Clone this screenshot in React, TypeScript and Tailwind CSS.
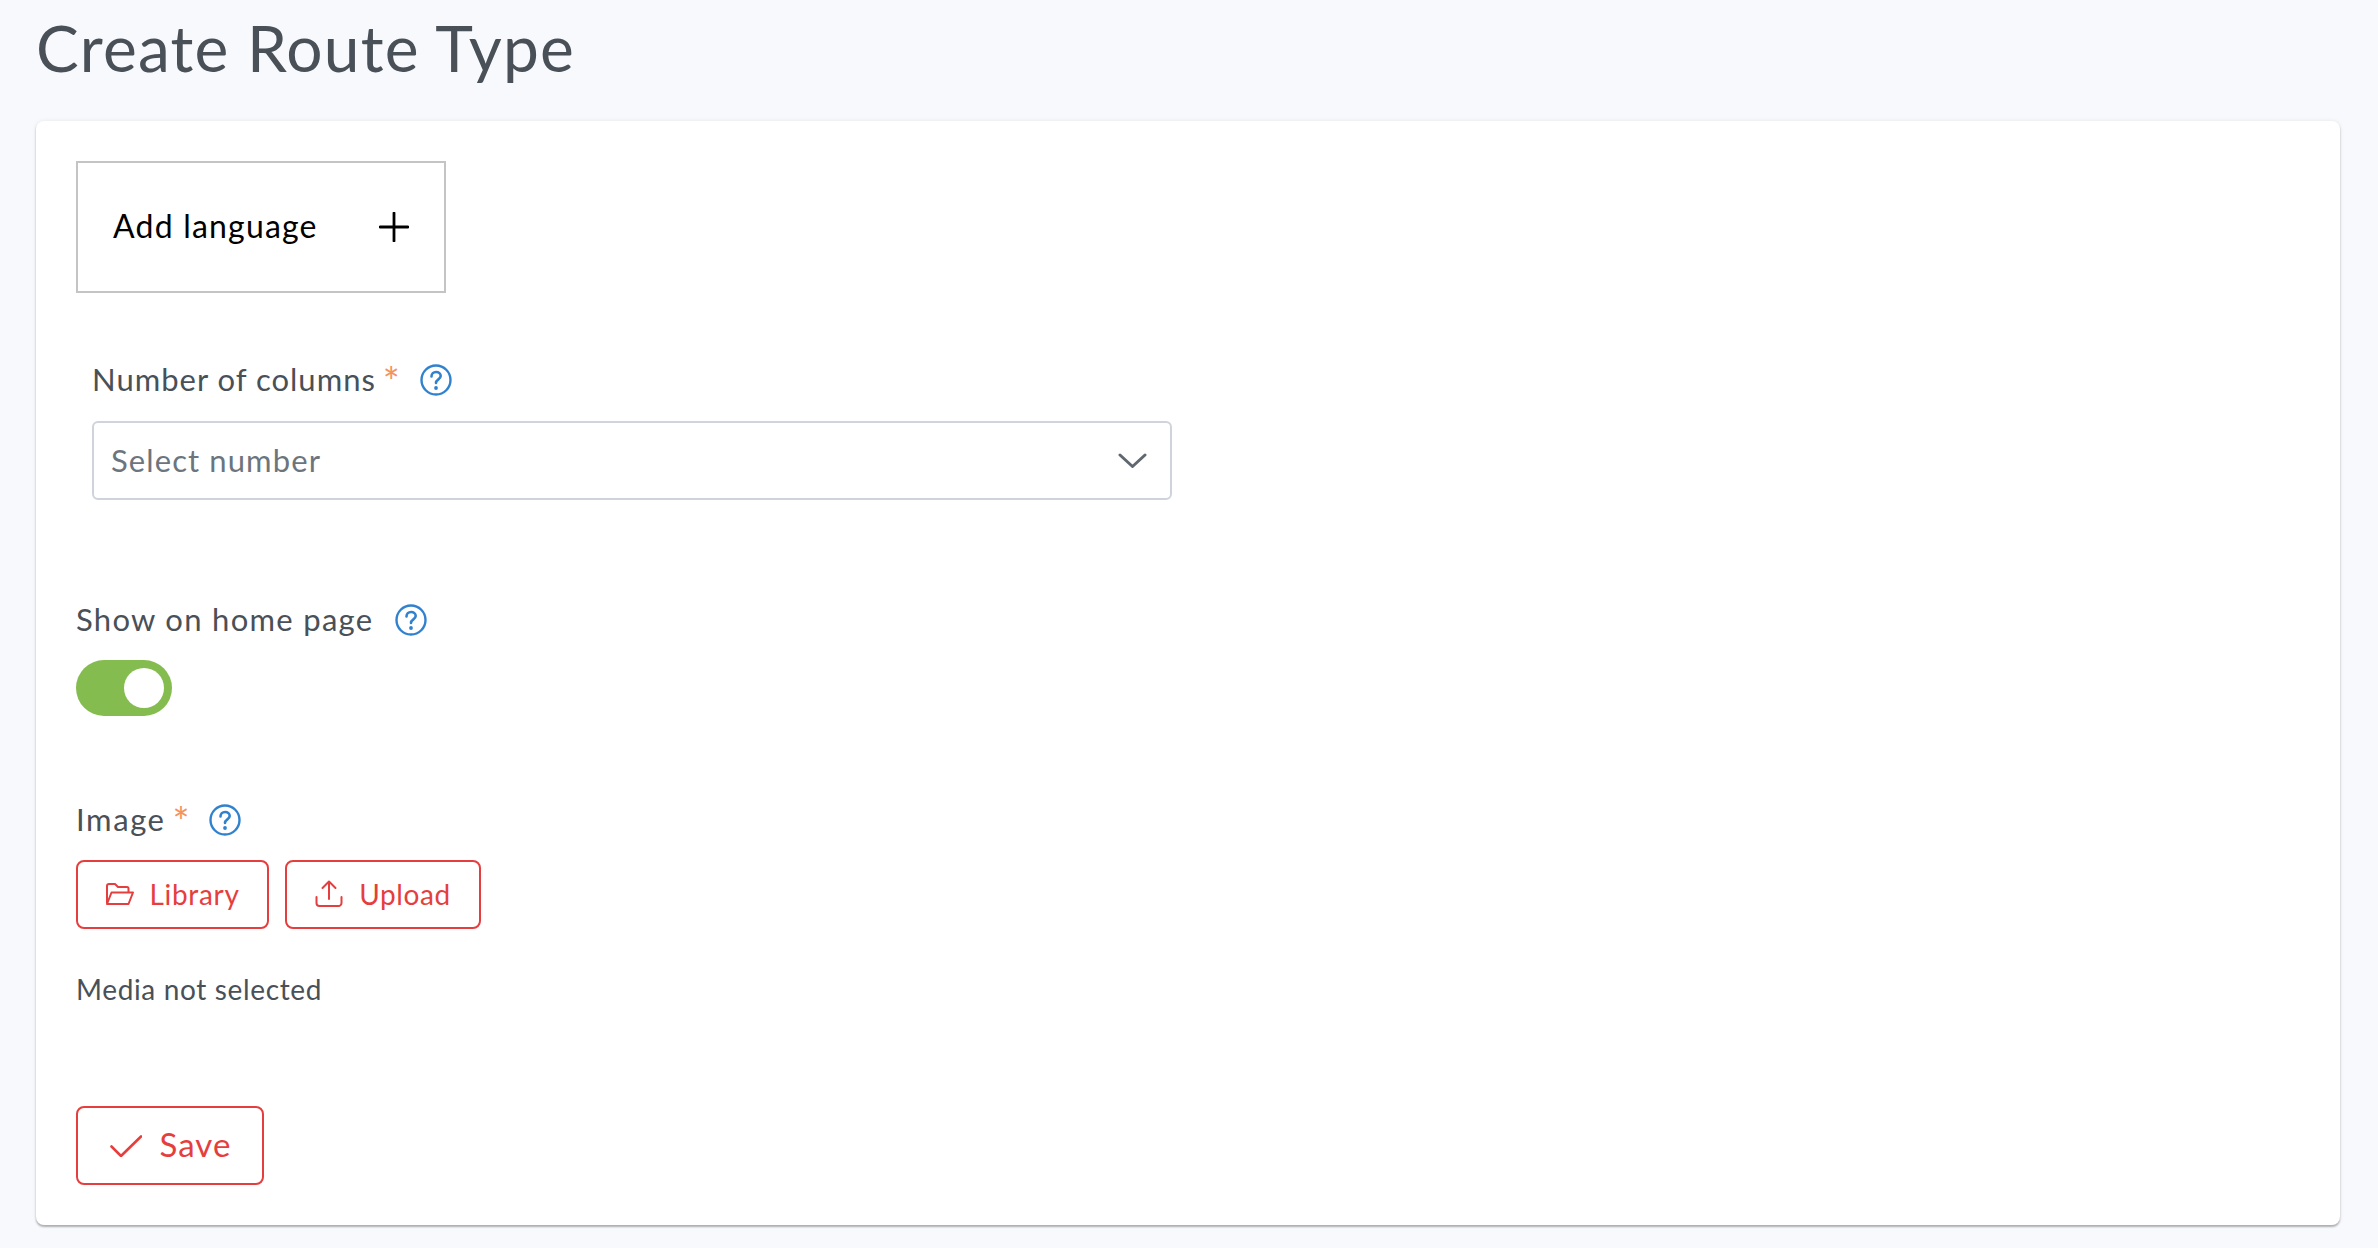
const HelpIcon = () => (
  <svg viewBox="0 0 32 32" className="h-8 w-8 shrink-0" fill="none" stroke="#3182ce">
    <circle cx="16" cy="16" r="14.5" strokeWidth="2.4" />
    <path d="M11.5 12.5c0-2.8 2-4.5 4.6-4.5 2.7 0 4.6 1.7 4.6 4 0 3.4-4.7 3.4-4.7 7" strokeWidth="2.6" strokeLinecap="round" />
    <circle cx="16" cy="24" r="1.9" fill="#3182ce" stroke="none" />
  </svg>
);

const Required = () => <span className="ml-[7px] mt-[3px] text-[40px] leading-none text-[#f6925f]">*</span>;

const FolderIcon = () => (
  <svg viewBox="0 0 28 22" className="h-[22px] w-[28px]" fill="none" stroke="#e53e3e" strokeWidth="2" strokeLinejoin="round">
    <path d="M1 20.5V3a2 2 0 0 1 2-2h6l3 3h9a1.5 1.5 0 0 1 1.5 1.5V9" />
    <path d="M1 21L5.5 9.5H27L22.5 21Z" />
  </svg>
);

const UploadIcon = () => (
  <svg viewBox="0 0 28 28" className="h-7 w-7" fill="none" stroke="#e53e3e" strokeWidth="2" strokeLinecap="round" strokeLinejoin="round">
    <path d="M14 19V2M7.5 8L14 1.5 20.5 8" />
    <path d="M1.5 17v6a3 3 0 0 0 3 3h19a3 3 0 0 0 3-3v-6" />
  </svg>
);

export default function App() {
  return (
    <div className="min-h-screen bg-[#f8f9fd] pl-9 pr-[38px] font-['Lato',sans-serif]">
      <h1 className="flex h-[121px] items-start pt-2 text-[64px] leading-[80px] tracking-[1.2px] text-[#495057]">Create Route Type</h1>

      <div className="rounded-lg bg-white p-10 shadow-[0_2px_2px_rgba(0,0,0,0.28),0_0_4px_rgba(0,0,0,0.08)]">
        <button className="flex h-[132px] w-[370px] items-center border-2 border-[#c4c4c4] pb-[2px] pl-[35px] text-[32px] tracking-[1.2px] text-black">
          <span>Add language</span>
          <svg viewBox="0 0 30 30" className="ml-auto mr-[35px] mt-[2px] h-[30px] w-[30px]" stroke="#000" strokeWidth="2.8" strokeLinecap="round">
            <path d="M15 1v28M1 15h28" />
          </svg>
        </button>

        <div className="ml-4 mt-[71px] w-[1080px]">
          <div className="flex h-8 items-center text-[31px] tracking-[1px] text-[#495057]">
            <span className="-mt-[1px]">Number of columns</span>
            <Required />
            <span className="ml-[19px]"><HelpIcon /></span>
          </div>
          <div className="mt-[25px] flex h-[79px] items-center justify-between rounded-md border-2 border-[#ced4da] pl-[17px] pr-[23px] text-[31px] tracking-[1.1px] text-[#6c757d]">
            <span className="-mt-[1px]">Select number</span>
            <svg viewBox="0 0 29 15" className="h-[15px] w-[29px]" fill="none" stroke="#5f6870" strokeWidth="3" strokeLinecap="round" strokeLinejoin="round">
              <path d="M2 2l12.5 11.5L27 2" />
            </svg>
          </div>
        </div>

        <div className="mt-[104px] flex h-8 items-center text-[31px] tracking-[1.3px] text-[#495057]">
          <span className="-mt-[1px]">Show on home page</span>
          <span className="ml-[22px]"><HelpIcon /></span>
        </div>
        <div className="mt-6 flex h-14 w-24 items-center justify-end rounded-full bg-[#84bc4f] pr-2">
          <div className="h-10 w-10 rounded-full bg-white" />
        </div>

        <div className="mt-[88px] flex h-8 items-center text-[31px] tracking-[1.6px] text-[#495057]">
          <span className="-mt-[1px]">Image</span>
          <Required />
          <span className="ml-[18px]"><HelpIcon /></span>
        </div>
        <div className="mt-6 flex gap-4">
          <button className="flex h-[69px] w-[193px] items-center justify-center gap-[15px] rounded-lg border-2 border-[#e53e3e] pb-[1px] pl-[1px] text-[28px] tracking-[0.7px] text-[#e53e3e]">
            <FolderIcon />
            <span>Library</span>
          </button>
          <button className="flex h-[69px] w-[196px] items-center justify-center gap-[16px] rounded-lg border-2 border-[#e53e3e] pb-[1px] text-[28px] tracking-[0.6px] text-[#e53e3e]">
            <UploadIcon />
            <span>Upload</span>
          </button>
        </div>

        <div className="mt-11 h-8 text-[28px] leading-8 tracking-[0.65px] text-[#495057]">Media not selected</div>

        <button className="mt-[101px] flex h-[79px] w-[188px] items-center justify-center gap-[17px] rounded-lg border-2 border-[#e53e3e] pl-[2px] text-[33px] tracking-[1.1px] text-[#e53e3e]">
          <svg viewBox="0 0 32 22" className="h-[22px] w-8" fill="none" stroke="#e53e3e" strokeWidth="2.6" strokeLinecap="round" strokeLinejoin="round">
            <path d="M1.5 11.5L11 21 31 1.5" />
          </svg>
          <span className="-mt-[2px]">Save</span>
        </button>
      </div>
    </div>
  );
}
